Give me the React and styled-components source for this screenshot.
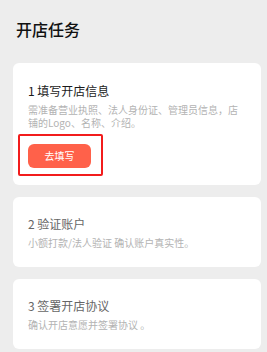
import styled, { createGlobalStyle } from 'styled-components'

const GlobalStyle = createGlobalStyle`
  html, body {
    margin: 0;
    padding: 0;
    background: #ededed;
  }
  body {
    font-family: "Noto Sans CJK SC", "Noto Sans", sans-serif;
  }
`

const Page = styled.div`
  display: flex;
  flex-direction: column;
  min-height: 352px;
  padding: 17px 6px 0 13px;
  box-sizing: border-box;
  background: #ededed;
`

const Title = styled.h1`
  margin: 0 0 22px 3px;
  font-size: 16px;
  line-height: 24px;
  font-weight: 500;
  color: #111;
`

const List = styled.div`
  display: flex;
  flex-direction: column;
  gap: 12px;
`

const Card = styled.div`
  display: flex;
  flex-direction: column;
  align-items: flex-start;
  background: #fff;
  border-radius: 6px;
  padding: ${({ $compact }) => ($compact ? '19px 15px 9px' : '18px 15px 18px')};
`

const StepTitle = styled.div`
  font-size: 12px;
  line-height: 18px;
  color: ${({ $active }) => ($active ? '#1a1a1a' : '#666')};
`

const StepDesc = styled.div`
  margin-top: 3px;
  font-size: 10px;
  line-height: 13px;
  color: #b3b3b3;
`

const Highlight = styled.div`
  display: flex;
  margin: 5px 0 0 -10px;
  padding: 8px 10px 6px 8px;
  border: 2px solid #f21c1c;
  border-radius: 2px;
`

const Button = styled.button`
  width: 63px;
  height: 24px;
  border: 0;
  padding: 0;
  border-radius: 6px;
  background: #ff614a;
  color: #fff;
  font-family: inherit;
  font-size: 10px;
  line-height: 24px;
`

const steps = [
  {
    title: '1 填写开店信息',
    desc: '需准备营业执照、法人身份证、管理员信息，店铺的Logo、名称、介绍。',
    active: true,
  },
  { title: '2 验证账户', desc: '小额打款/法人验证 确认账户真实性。' },
  { title: '3 签署开店协议', desc: '确认开店意愿并签署协议 。' },
]

function App() {
  return (
    <Page>
      <GlobalStyle />
      <Title>开店任务</Title>
      <List>
        {steps.map(step => (
          <Card key={step.title} $compact={step.active}>
            <StepTitle $active={step.active}>{step.title}</StepTitle>
            <StepDesc>{step.desc}</StepDesc>
            {step.active && (
              <Highlight>
                <Button type="button">去填写</Button>
              </Highlight>
            )}
          </Card>
        ))}
      </List>
    </Page>
  )
}

export default App
